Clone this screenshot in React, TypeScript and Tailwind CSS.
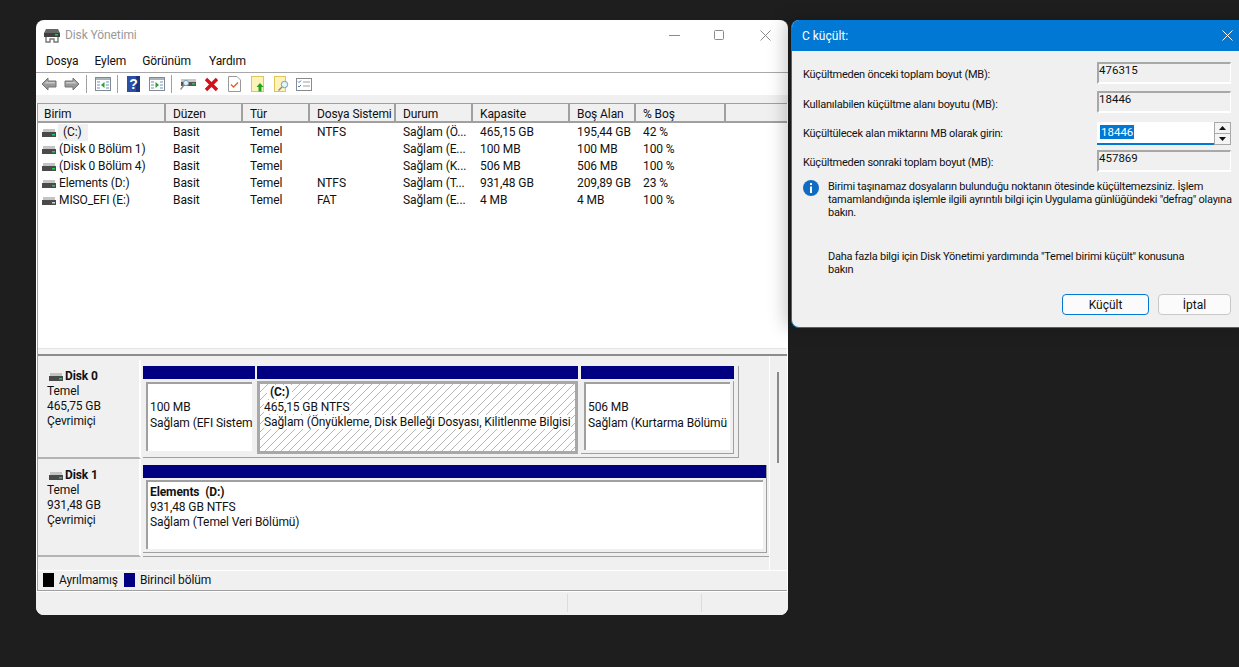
const columns = [
  { label: 'Birim', width: 'w-[128px]' },
  { label: 'Düzen', width: 'w-[77px]' },
  { label: 'Tür', width: 'w-[67px]' },
  { label: 'Dosya Sistemi', width: 'w-[86px]' },
  { label: 'Durum', width: 'w-[77px]' },
  { label: 'Kapasite', width: 'w-[97px]' },
  { label: 'Boş Alan', width: 'w-[66px]' },
  { label: '% Boş', width: 'w-[90px]' },
];

const volumes = [
  ['(C:)', 'Basit', 'Temel', 'NTFS', 'Sağlam (Ö...', '465,15 GB', '195,44 GB', '42 %'],
  ['(Disk 0 Bölüm 1)', 'Basit', 'Temel', '', 'Sağlam (E...', '100 MB', '100 MB', '100 %'],
  ['(Disk 0 Bölüm 4)', 'Basit', 'Temel', '', 'Sağlam (K...', '506 MB', '506 MB', '100 %'],
  ['Elements (D:)', 'Basit', 'Temel', 'NTFS', 'Sağlam (T...', '931,48 GB', '209,89 GB', '23 %'],
  ['MISO_EFI (E:)', 'Basit', 'Temel', 'FAT', 'Sağlam (E...', '4 MB', '4 MB', '100 %'],
];

const DiskIcon = ({ led = '#22c55e' }: { led?: string }) => (
  <svg width="14" height="8" viewBox="0 0 14 8" className="shrink-0">
    <rect x="1" y="0" width="12" height="3" fill="#c4c4c4" />
    <rect x="0" y="3" width="14" height="5" fill="#4a4a4a" />
    <rect x="10" y="5" width="3" height="1.5" fill={led} />
  </svg>
);

const Arrow = ({ flip }: { flip?: boolean }) => (
  <svg width="16" height="14" viewBox="0 0 16 14" className={flip ? 'scale-x-[-1]' : ''}>
    <path d="M1 7 L7 1 V4 H15 V10 H7 V13 Z" fill="#9a9a9a" stroke="#757575" />
    <path d="M3 7 L6.5 3.5 V5 H14 V6.5 H5 Z" fill="#c9c9c9" />
  </svg>
);

const Sep = () => <div className="w-px h-[18px] bg-[#a0a0a0]" />;

const PaneIcon = ({ right }: { right?: boolean }) => (
  <svg width="16" height="14" viewBox="0 0 16 14">
    <rect x="0.5" y="0.5" width="15" height="13" fill="#fff" stroke="#7f8a94" />
    <rect x="1" y="1" width="14" height="2" fill="#a9b4bd" />
    <path d="M2 5h3M2 8h3M2 11h3M11 5h3M11 8h3M11 11h3" stroke="#6d93b8" />
    {right ? <path d="M6.5 5 L10 8 L6.5 11 Z" fill="#2f9e37" /> : <path d="M9.5 5 L6 8 L9.5 11 Z" fill="#2f9e37" />}
  </svg>
);

const Toolbar = () => (
  <div className="h-[22px] shrink-0 bg-white flex items-center pl-[5px]">
    <Arrow />
    <div className="w-[7px]" />
    <Arrow flip />
    <div className="w-[6px]" />
    <Sep />
    <div className="w-[8px]" />
    <PaneIcon />
    <div className="w-[6px]" />
    <Sep />
    <div className="w-[9px]" />
    <svg width="13" height="16" viewBox="0 0 13 16">
      <rect width="13" height="16" fill="#2c4fa3" />
      <rect x="9" width="4" height="16" fill="#1c3580" />
      <text x="6.5" y="13" textAnchor="middle" fontSize="14" fontWeight="700" fill="#fff" fontFamily="Liberation Sans, sans-serif">?</text>
    </svg>
    <div className="w-[9px]" />
    <PaneIcon right />
    <div className="w-[6px]" />
    <Sep />
    <div className="w-[8px]" />
    <svg width="16" height="14" viewBox="0 0 16 14">
      <rect x="1" y="2" width="15" height="3" fill="#c8c8c8" />
      <rect x="1" y="5" width="15" height="4" fill="#555" />
      <rect x="12" y="6" width="3" height="1.5" fill="#22c55e" />
      <circle cx="6" cy="6" r="2.6" fill="#dff1fb" stroke="#7f9db3" />
      <path d="M4 8 L0.5 12.5" stroke="#8d8d8d" strokeWidth="1.5" />
    </svg>
    <div className="w-[8px]" />
    <svg width="15" height="15" viewBox="0 0 15 15">
      <path d="M2 2 L13 13 M13 2 L2 13" stroke="#d4101a" strokeWidth="3.4" />
    </svg>
    <div className="w-[9px]" />
    <svg width="13" height="16" viewBox="0 0 13 16">
      <path d="M0.5 0.5 H9 L12.5 4 V15.5 H0.5 Z" fill="#fff" stroke="#9a9a9a" />
      <path d="M3 8.5 L5.5 11 L10 6.5" fill="none" stroke="#e2602c" strokeWidth="1.3" />
    </svg>
    <div className="w-[10px]" />
    <svg width="13" height="16" viewBox="0 0 13 16">
      <rect x="0.5" y="0.5" width="12" height="15" fill="#fdf2b8" stroke="#e0c55a" />
      <path d="M9 7 L12.5 11 H10.5 V15.5 H7.5 V11 H5.5 Z" fill="#1ea51e" />
    </svg>
    <div className="w-[10px]" />
    <svg width="15" height="16" viewBox="0 0 15 16">
      <rect x="0.5" y="0.5" width="11" height="15" fill="#fdf2b8" stroke="#e0c55a" />
      <circle cx="10.5" cy="8.5" r="3.2" fill="#e3f3fb" stroke="#7c99ad" />
      <path d="M8 11 L4.5 14.5" stroke="#8a8a8a" strokeWidth="1.5" />
    </svg>
    <div className="w-[7px]" />
    <svg width="16" height="13" viewBox="0 0 16 13">
      <rect x="0.5" y="0.5" width="15" height="12" fill="#fff" stroke="#8a8a8a" />
      <path d="M2 3.5 L3 4.5 L5 2.5 M2 8 L3 9 L5 7" fill="none" stroke="#2f7fd0" />
      <path d="M7 4h7M7 8h7" stroke="#a0a0a0" />
    </svg>
  </div>
);

const VolumeList = () => (
  <div className="h-[245px] shrink-0 bg-white flex flex-col">
    <div className="h-[20px] flex border-t border-b-2 border-[#a0a0a0] bg-[#f0f0f0]">
      {columns.map((col, i) => (
        <div key={col.label} className={`${col.width} h-full border-r-2 border-r-[#a0a0a0] leading-[18px] pt-px ${i === 0 ? 'pl-[6px]' : 'pl-[7px]'}`}>
          {col.label}
        </div>
      ))}
      <div className="flex-1" />
    </div>
    <div className="flex-1 pt-px">
      {volumes.map((row, r) => (
        <div key={row[0]} className="h-[17px] flex leading-[17px]">
          {row.map((cell, i) => (
            <div key={i} className={`${columns[i].width} ${i === 0 ? 'pl-[4px] flex items-center gap-[3px]' : 'pl-[7px]'} whitespace-nowrap overflow-hidden`}>
              {i === 0 ? (
                <>
                  <DiskIcon led={r === 4 ? '#d0d0d0' : '#22c55e'} />
                  <span className={r === 0 ? 'bg-[#f0f0f0] pl-[5px] pr-[6px] -ml-[1px]' : ''}>{cell}</span>
                </>
              ) : (
                cell
              )}
            </div>
          ))}
        </div>
      ))}
    </div>
  </div>
);

const DiskLabel = ({ name, size }: { name: string; size: string }) => (
  <div className="w-[103px] h-full shrink-0 bg-[#f0f0f0] border-b-2 border-b-[#b4b4b4] border-r-2 border-r-white pl-[9px] pt-[9px] leading-[15px]">
    <div className="flex items-center gap-[2px] ml-[2px] font-bold">
      <DiskIcon />
      <span>{name}</span>
    </div>
    <div>Temel</div>
    <div>{size}</div>
    <div>Çevrimiçi</div>
  </div>
);

const Partition = ({ width, lines, outlined }: { width: string; lines: string[]; outlined?: boolean }) => (
  <div className={`${width} shrink-0 h-[88px] flex flex-col`}>
    <div className="h-[13px] bg-[#000080]" />
    <div className={`mt-[2px] flex-1 bg-[#f0f0f0] pl-[3px] pt-px pb-[3px] pr-[3px] ${outlined ? 'border-r border-b border-[#a0a0a0]' : ''}`}>
      <div className="h-full bg-white border-t-2 border-l-2 border-[#a0a0a0] pl-[2px] pt-[16px] leading-[15.5px] whitespace-nowrap">
        {lines.map((line) => (
          <div key={line}>{line}</div>
        ))}
      </div>
    </div>
  </div>
);

const SelectedPartition = () => (
  <div className="w-[321px] shrink-0 h-[88px] ml-[2px] mr-[3px] flex flex-col">
    <div className="h-[13px] bg-[#000080]" />
    <div className="mt-[2px] flex-1 border-[3px] border-[#a8a8a8] bg-[repeating-linear-gradient(135deg,#ffffff_0,#ffffff_5px,#b8b8b8_5px,#b8b8b8_5.7px)] pl-[4px] leading-[15px] whitespace-nowrap overflow-hidden pt-[1px]">
      <div className="font-bold pl-[3px]"><span className="bg-white px-[3px]">(C:)</span></div>
      <div><span className="bg-white">465,15 GB NTFS</span></div>
      <div><span className="bg-white">Sağlam (Önyükleme, Disk Belleği Dosyası, Kilitlenme Bilgisi</span></div>
    </div>
  </div>
);

const DiskPane = () => (
  <div className="h-[216px] shrink-0 bg-[#f0f0f0] flex relative border-t-2 border-t-[#8c8c8c]">
    <div className="flex-1 pt-[4px] flex flex-col">
      <div className="h-[99px] flex">
        <DiskLabel name="Disk 0" size="465,75 GB" />
        <div className="flex-1 pl-[2px] pt-[6px]">
          <div className="w-[596px] h-[92px] border-r border-b border-[#a0a0a0] flex items-start">
            <Partition width="w-[112px]" lines={['100 MB', 'Sağlam (EFI Sistem']} />
            <SelectedPartition />
            <Partition width="w-[153px]" outlined lines={['506 MB', 'Sağlam (Kurtarma Bölümü']} />
          </div>
        </div>
      </div>
      <div className="h-[98px] flex">
        <DiskLabel name="Disk 1" size="931,48 GB" />
        <div className="flex-1 pl-[2px] pt-[6px]">
          <div className="w-[626px] h-[92px] border-b border-[#a0a0a0]">
            <div className="w-[624px] h-[88px] border-r border-b border-[#a0a0a0] flex flex-col">
              <div className="h-[13px] bg-[#000080]" />
              <div className="mt-[2px] flex-1 pl-[3px] pb-[3px] pr-[3px]">
                <div className="h-full bg-white border-t-2 border-l-2 border-[#a0a0a0] pl-[2px] leading-[15px] pt-[3px]">
                  <div className="font-bold">Elements&nbsp; (D:)</div>
                  <div>931,48 GB NTFS</div>
                  <div>Sağlam (Temel Veri Bölümü)</div>
                </div>
              </div>
            </div>
          </div>
        </div>
      </div>
    </div>
    {/* scrollbar track edge and thumb */}
    <div className="absolute right-[17px] top-0 bottom-0 w-px bg-white" />
    <div className="absolute right-[8px] top-[16px] w-[2px] h-[91px] bg-[#8a8a8a]" />
  </div>
);

const MainWindow = () => (
  <div className="absolute left-[36px] top-[20px] w-[752px] h-[595px] bg-white rounded-lg overflow-hidden flex flex-col text-[12px] tracking-[-0.1px] text-[#111]">
    <div className="h-[30px] flex items-center shrink-0">
      <svg width="16" height="15" viewBox="0 0 16 15" className="ml-[8px]">
        <path d="M2 1 H14 L16 5 H0 Z" fill="#666" />
        <rect x="0" y="5" width="16" height="4" fill="#3f3f3f" />
        <rect x="11" y="6" width="3" height="1.5" fill="#22c55e" />
        <path d="M2 9 V14 H6 V11 H10 V14 H14 V9" fill="none" stroke="#777" strokeWidth="1.4" />
      </svg>
      <span className="ml-[5px] text-[#9a9a9a]">Disk Yönetimi</span>
      <div className="ml-auto flex items-center pr-[17px]">
        <svg width="11" height="11" viewBox="0 0 11 11"><path d="M0 5.5 H11" stroke="#8a8a8a" /></svg>
        <svg width="10" height="10" viewBox="0 0 10 10" className="ml-[34px]"><rect x="0.5" y="0.5" width="9" height="9" rx="1" fill="none" stroke="#8a8a8a" /></svg>
        <svg width="11" height="11" viewBox="0 0 11 11" className="ml-[36px]"><path d="M0.5 0.5 L10.5 10.5 M10.5 0.5 L0.5 10.5" stroke="#8a8a8a" /></svg>
      </div>
    </div>
    <div className="h-[23px] shrink-0 border-b border-[#a8a8a8] flex items-center pl-[10px] gap-[16px]">
      <span>Dosya</span>
      <span>Eylem</span>
      <span>Görünüm</span>
      <span className="ml-[2px]">Yardım</span>
    </div>
    <Toolbar />
    <div className="h-[8px] bg-[#f0f0f0] shrink-0" />
    <div className="mx-px border-l border-[#a0a0a0] shrink-0 flex flex-col">
      <VolumeList />
      <div className="h-[6px] bg-[#f4f4f4] border-t border-[#e4e4e4]" />
      <DiskPane />
      <div className="h-[21px] bg-[#f0f0f0] border-t border-white border-b border-b-[#a0a0a0] flex items-center pl-[5px] pb-[2px]">
        <div className="w-[11px] h-[14px] bg-black" />
        <span className="ml-[5px]">Ayrılmamış</span>
        <div className="ml-[6px] w-[11px] h-[14px] bg-[#000080]" />
        <span className="ml-[5px]">Birincil bölüm</span>
      </div>
    </div>
    <div className="flex-1 bg-[#f0f0f0] border-t border-white flex justify-end">
      <div className="w-[134px] border-l border-[#dcdcdc] mt-[2px] mb-[3px]" />
      <div className="w-[87px] border-l border-[#dcdcdc] mt-[2px] mb-[3px]" />
    </div>
  </div>
);

const ReadOnlyBox = ({ value }: { value: string }) => (
  <div className="w-[134px] h-[22px] border-t-2 border-l-2 border-t-[#a8a8a8] border-l-[#a8a8a8] border-r border-b-2 border-r-white border-b-white leading-[13px] text-[11.5px] tracking-normal">
    {value}
  </div>
);

const ShrinkDialog = () => (
  <div className="absolute left-[791px] top-[20px] w-[460px] h-[308px] bg-[#f0f0f0] rounded-l-lg overflow-hidden border-l border-b border-[#0078d4] shadow-[-6px_0_18px_rgba(0,0,0,0.22)] text-[11px] tracking-[-0.24px] text-[#111]">
    <div className="h-[31px] bg-[#0078d4] text-white flex items-center pl-[10px] text-[12px] tracking-normal">
      <span>C küçült:</span>
      <svg width="11" height="11" viewBox="0 0 11 11" className="absolute left-[430px] top-[10px]">
        <path d="M0.5 0.5 L10.5 10.5 M10.5 0.5 L0.5 10.5" stroke="#fff" />
      </svg>
    </div>
    <div className="w-[439px] pl-[11px]">
      <div className="h-[28px] mt-[8px] flex items-center justify-between">
        <span className="mt-[4px]">Küçültmeden önceki toplam boyut (MB):</span>
        <ReadOnlyBox value="476315" />
      </div>
      <div className="h-[28px] mt-px flex items-center justify-between">
        <span className="mt-[7px]">Kullanılabilen küçültme alanı boyutu (MB):</span>
        <ReadOnlyBox value="18446" />
      </div>
      <div className="h-[28px] mt-[3px] flex items-center justify-between">
        <span className="mt-[3px]">Küçültülecek alan miktarını MB olarak girin:</span>
        <div className="w-[134px] h-[23px] flex">
          <div className="flex-1 bg-white border-b-2 border-[#0078d4] pl-[3px] pt-[2px] text-[11.5px] tracking-normal">
            <span className="bg-[#0078d4] text-white px-px">18446</span>
          </div>
          <div className="w-[17px] flex flex-col">
            <div className="flex-1 border border-[#a8a8a8] bg-[#f4f4f4] flex items-center justify-center">
              <svg width="7" height="4" viewBox="0 0 7 4"><path d="M3.5 0 L7 4 H0 Z" fill="#111" /></svg>
            </div>
            <div className="flex-1 border border-t-0 border-[#a8a8a8] bg-[#f4f4f4] flex items-center justify-center">
              <svg width="7" height="4" viewBox="0 0 7 4"><path d="M3.5 4 L7 0 H0 Z" fill="#111" /></svg>
            </div>
          </div>
        </div>
      </div>
      <div className="h-[28px] flex items-center justify-between">
        <span className="mt-[5px]">Küçültmeden sonraki toplam boyut (MB):</span>
        <ReadOnlyBox value="457869" />
      </div>
      <div className="flex mt-[5px] gap-[9px]">
        <svg width="16" height="16" viewBox="0 0 16 16" className="shrink-0">
          <circle cx="8" cy="8" r="8" fill="#0f6cc4" />
          <rect x="7" y="3" width="2" height="2" fill="#fff" />
          <rect x="7" y="6.5" width="2" height="6.5" fill="#fff" />
        </svg>
        <div className="leading-[13px]">
          <p className="w-[408px]">Birimi taşınamaz dosyaların bulunduğu noktanın ötesinde küçültemezsiniz. İşlem tamamlandığında işlemle ilgili ayrıntılı bilgi için Uygulama günlüğündeki "defrag" olayına bakın.</p>
          <p className="mt-[31px] w-[375px]">Daha fazla bilgi için Disk Yönetimi yardımında "Temel birimi küçült" konusuna bakın</p>
        </div>
      </div>
      <div className="flex justify-end gap-[9px] mt-[18px] text-[12px] tracking-normal">
        <button className="w-[87px] h-[21px] rounded-[4px] border border-[#0078d4] bg-[#fbfbfb]">Küçült</button>
        <button className="w-[73px] h-[21px] rounded-[4px] border border-[#c8c8c8] bg-[#fbfbfb]">İptal</button>
      </div>
    </div>
  </div>
);

export default function App() {
  return (
    <div className="relative w-[1239px] h-[667px] overflow-hidden bg-[#1e1e1e] font-['Roboto','Noto_Sans',sans-serif]">
      <MainWindow />
      <ShrinkDialog />
    </div>
  );
}
